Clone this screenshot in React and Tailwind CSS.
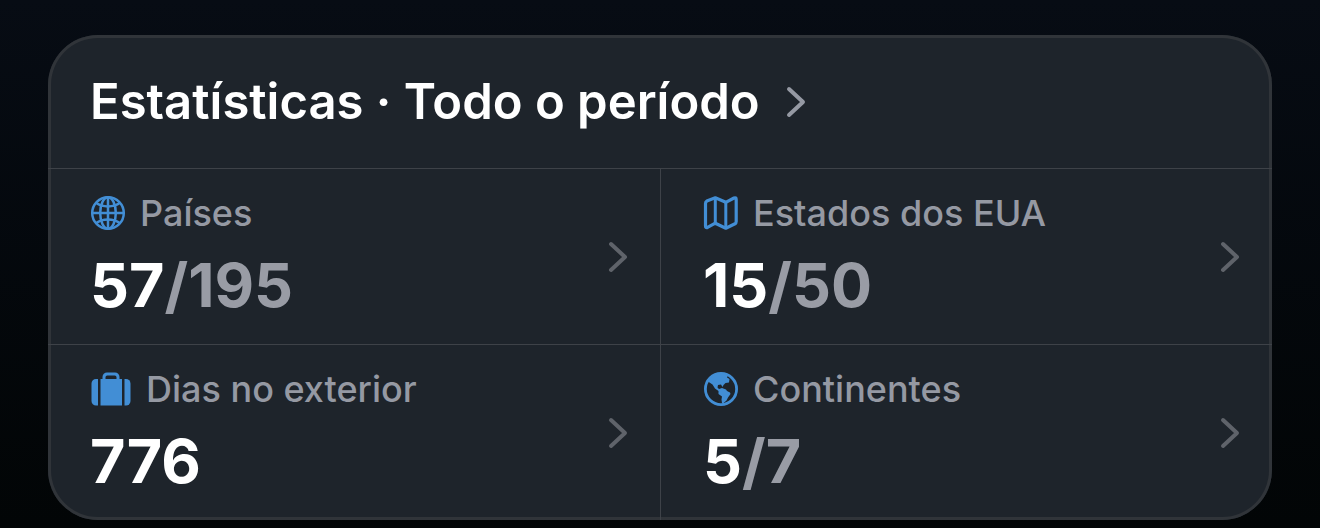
import React from 'react';

const Chevron = ({ className }) => (
  <svg className={className} viewBox="0 0 20 32" fill="none" stroke="currentColor" aria-hidden="true">
    <path strokeLinecap="round" strokeLinejoin="round" strokeWidth={4} d="M3 3l14 13L3 29" />
  </svg>
);

const GlobeIcon = () => (
  <svg className="h-[36px] w-[36px]" viewBox="0 0 36 36" fill="none" stroke="currentColor" strokeWidth={2.5} aria-hidden="true">
    <circle cx="18" cy="18" r="15.8" />
    <ellipse cx="18" cy="18" rx="7.8" ry="15.8" />
    <path d="M18 2v32M2 18h32" />
    <path d="M6 7.8c3 2.200 7.200 3.600 12 3.600s9-1.400 12-3.600M6 28.200c3-2.200 7.200-3.600 12-3.600s9 1.400 12 3.600" />
  </svg>
);

const MapIcon = () => (
  <svg className="h-[36px] w-[36px]" viewBox="0 0 36 36" fill="none" stroke="currentColor" strokeLinejoin="round" aria-hidden="true">
    <path strokeWidth={3.2} d="M2.500 8.500Q2.500 6.900 3.800 6.100L12.300 2.800L22.800 7.300L31 3Q33.200 2.200 33.200 4.400V26.500Q33.200 28 32 28.800L22.800 33.200L12.300 28.200L4.500 32.400Q2.500 33.200 2.500 31Z" />
    <path strokeWidth={3} d="M12.300 3v25M22.800 7v26" />
  </svg>
);

const SuitcaseIcon = () => (
  <svg className="h-[36px] w-[42px]" viewBox="0 0 42 36" fill="currentColor" aria-hidden="true">
    <path d="M8 8v26.500H6a4.500 4.500 0 0 1-4.500-4.500V12.500A4.500 4.500 0 0 1 6 8z" />
    <path d="M34.500 8v26.500H36a4.500 4.500 0 0 0 4.500-4.500V12.500A4.500 4.500 0 0 0 36 8z" />
    <path fillRule="evenodd" d="M10.500 8h2V6A4.500 4.500 0 0 1 17 1.500h8A4.500 4.500 0 0 1 29.500 6v2H32v26.500H10.500zM15.500 8h11V6.300A1.800 1.800 0 0 0 24.700 4.500h-7.400A1.800 1.800 0 0 0 15.500 6.300z" />
  </svg>
);

const AmericasIcon = () => (
  <svg className="h-[36px] w-[36px]" viewBox="0 0 36 36" fill="currentColor" aria-hidden="true">
    <circle cx="18" cy="18" r="15.6" fill="none" stroke="currentColor" strokeWidth={2.8} />
    <path d="M5 10.500C8 5 13 2.500 18 2.500c2.500 0 4.800.5 7 1.500l-1 2.500 2.500 1.500-.5 3.500-3.500.5-2 2-1 2-1.500-2.500-3 .5-.5 2.500 1.500 1.500 3-1 4 1.500 1 1.500 3 1.500.5 1.500-2.500 3.500-1.500 3-3.500 3-1-.5-.5-3.500.5-3-3.500-2.500v-3l-3.500-2.500-2.500-4z" />
  </svg>
);

const stats = [
  { label: 'Países', value: '57', total: '195', Icon: GlobeIcon },
  { label: 'Estados dos EUA', value: '15', total: '50', Icon: MapIcon },
  { label: 'Dias no exterior', value: '776', Icon: SuitcaseIcon },
  { label: 'Continentes', value: '5', total: '7', Icon: AmericasIcon },
];

const StatCell = ({ label, value, total, Icon }) => (
  <button
    type="button"
    className="flex items-center justify-between border-t border-[#3e4248] pt-[22px] pr-8 pb-[21px] pl-[42px] text-left even:border-l"
  >
    <span className="flex flex-col">
      <span className="flex items-center gap-3.5 text-[36px] leading-[44px] font-medium text-[#9599a3]">
        <span className="text-[#428ed5]">
          <Icon />
        </span>
        {label}
      </span>
      <span className="pt-3 text-[61px] leading-[76px] font-bold text-white">
        {value}
        {total && <span className="text-[#999ca5]">/{total}</span>}
      </span>
    </span>
    <Chevron className="h-8 w-5 text-[#5f636a]" />
  </button>
);

const App = () => {
  return (
    <main className="min-h-screen bg-linear-to-b from-[#070c14] to-[#020506] px-12 pt-[35px] pb-2 font-['Inter',sans-serif]">
      <section className="overflow-hidden rounded-[50px] bg-[#1e242b] shadow-[inset_0_0_0_3px_#303439]">
        {/* Header */}
        <h1>
          <button
            type="button"
            className="flex w-full items-center gap-[26px] px-[42px] pt-[35px] pb-[34px] text-left text-[49px] leading-[64px] font-semibold text-white"
          >
            Estatísticas · Todo o período
            <Chevron className="h-8 w-5 text-[#9599a3]" />
          </button>
        </h1>

        {/* Stats grid */}
        <div className="grid grid-cols-2">
          {stats.map((stat) => (
            <StatCell key={stat.label} {...stat} />
          ))}
        </div>
      </section>
    </main>
  );
};

export default App;
